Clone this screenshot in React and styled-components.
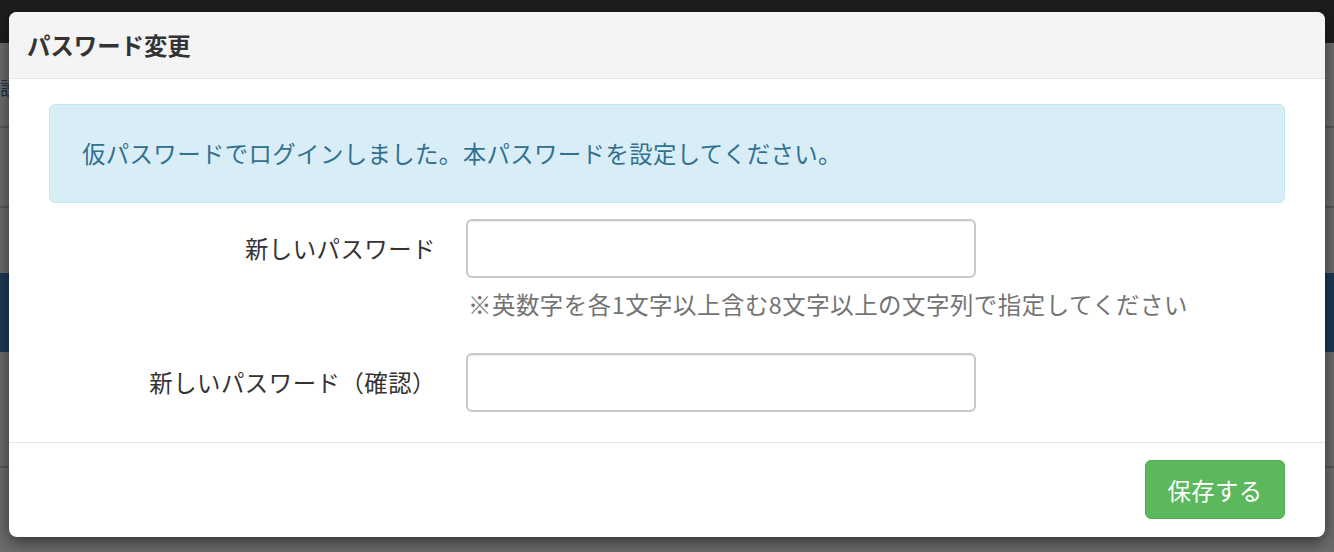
import styled, { createGlobalStyle } from 'styled-components';

const GlobalStyle = createGlobalStyle`
    html, body {
        margin: 0;
        padding: 0;
        height: 100%;
        background: #ffffff;
        font-family: "Noto Sans CJK JP", "Noto Sans", "Liberation Sans", sans-serif;
        color: #333333;
    }
    #root {
        height: 100%;
    }
`;

// ページ本体（モーダルの後ろ）
const Page = styled.div`
    position: relative;
    width: 1334px;
    height: 552px;
    overflow: hidden;
    background: #ffffff;
`;

const TopBar = styled.div`
    height: 43px;
    background: #474747;
`;

const PageRow = styled.div`
    height: ${(p) => p.$height}px;
    border-bottom: ${(p) => (p.$plain ? 'none' : '2px solid #cbcbcb')};
    display: flex;
    align-items: center;
    box-sizing: border-box;
`;

const PageLink = styled.span`
    font-size: 18px;
    color: #3a6ea8;
    margin-top: 4px;
`;

const Band = styled.div`
    height: 79px;
    background: #4387cc;
`;

const Backdrop = styled.div`
    position: absolute;
    inset: 0;
    background: rgba(0, 0, 0, 0.58);
`;

// モーダル
const Modal = styled.div`
    position: absolute;
    left: 9px;
    top: 12px;
    width: 1316px;
    height: 525px;
    background: #ffffff;
    border-radius: 8px;
    box-shadow: 0 5px 15px rgba(0, 0, 0, 0.5);
    display: flex;
    flex-direction: column;
    overflow: hidden;
`;

const Header = styled.div`
    height: 66px;
    background: #f4f4f4;
    border-bottom: 1px solid #e5e5e5;
    display: flex;
    align-items: center;
    padding: 0 18px;
`;

const Title = styled.h4`
    margin: 0;
    font-size: 23.4px;
    font-weight: bold;
    color: #333333;
    line-height: 33px;
`;

const Body = styled.div`
    padding: 25px 40px 0;
    height: 364px;
    box-sizing: border-box;
    border-bottom: 1px solid #e5e5e5;
`;

const Alert = styled.div`
    height: 99px;
    box-sizing: border-box;
    background: #d9edf7;
    border: 1px solid #bce8f1;
    border-radius: 6px;
    color: #31708f;
    font-size: 23.4px;
    letter-spacing: 0.4px;
    line-height: 33px;
    padding: 0 32px;
    display: flex;
    align-items: center;
    margin-bottom: 16px;
`;

const FormGrid = styled.div`
    display: grid;
    grid-template-columns: 387px 510px;
    column-gap: 30px;
`;

const Label = styled.label`
    text-align: right;
    font-size: 23.4px;
    letter-spacing: 0.5px;
    line-height: 33px;
    color: #333333;
    align-self: center;
`;

const Input = styled.input`
    height: 59px;
    box-sizing: border-box;
    border: 2px solid #c8c8c8;
    border-radius: 6px;
    box-shadow: inset 0 1px 1px rgba(0, 0, 0, 0.075);
    padding: 8px 16px;
    font-size: 20px;
    outline: none;
    width: 100%;
`;

const Hint = styled.p`
    grid-column: 2;
    margin: 10px 0 0 2px;
    font-size: 23.4px;
    letter-spacing: 0.55px;
    line-height: 33px;
    color: #737373;
    white-space: nowrap;
`;

const Spacer = styled.div`
    grid-column: 1 / span 2;
    height: ${(p) => p.$h}px;
`;

const Footer = styled.div`
    flex: 1;
    display: flex;
    justify-content: flex-end;
    align-items: flex-start;
    padding: 17px 40px 0;
`;

const SaveButton = styled.button`
    width: 140px;
    height: 59px;
    background: #5cb85c;
    border: 1px solid #4cae4c;
    border-radius: 6px;
    color: #ffffff;
    font-family: inherit;
    font-size: 23.4px;
    letter-spacing: 0.4px;
    cursor: pointer;
`;

export default function App() {
    return (
        <Page>
            <GlobalStyle />
            <TopBar />
            <PageRow $height={85}>
                <PageLink>設定</PageLink>
            </PageRow>
            <PageRow $height={80} />
            <PageRow $height={65} $plain />
            <Band />
            <PageRow $height={116} />
            <Backdrop />

            <Modal>
                <Header>
                    <Title>パスワード変更</Title>
                </Header>
                <Body>
                    <Alert>仮パスワードでログインしました。本パスワードを設定してください。</Alert>
                    <FormGrid>
                        <Label htmlFor="new-password">新しいパスワード</Label>
                        <Input id="new-password" type="password" />
                        <Hint>※英数字を各1文字以上含む8文字以上の文字列で指定してください</Hint>
                        <Spacer $h={32} />
                        <Label htmlFor="new-password-confirm">新しいパスワード（確認）</Label>
                        <Input id="new-password-confirm" type="password" />
                    </FormGrid>
                </Body>
                <Footer>
                    <SaveButton type="button">保存する</SaveButton>
                </Footer>
            </Modal>
        </Page>
    );
}
